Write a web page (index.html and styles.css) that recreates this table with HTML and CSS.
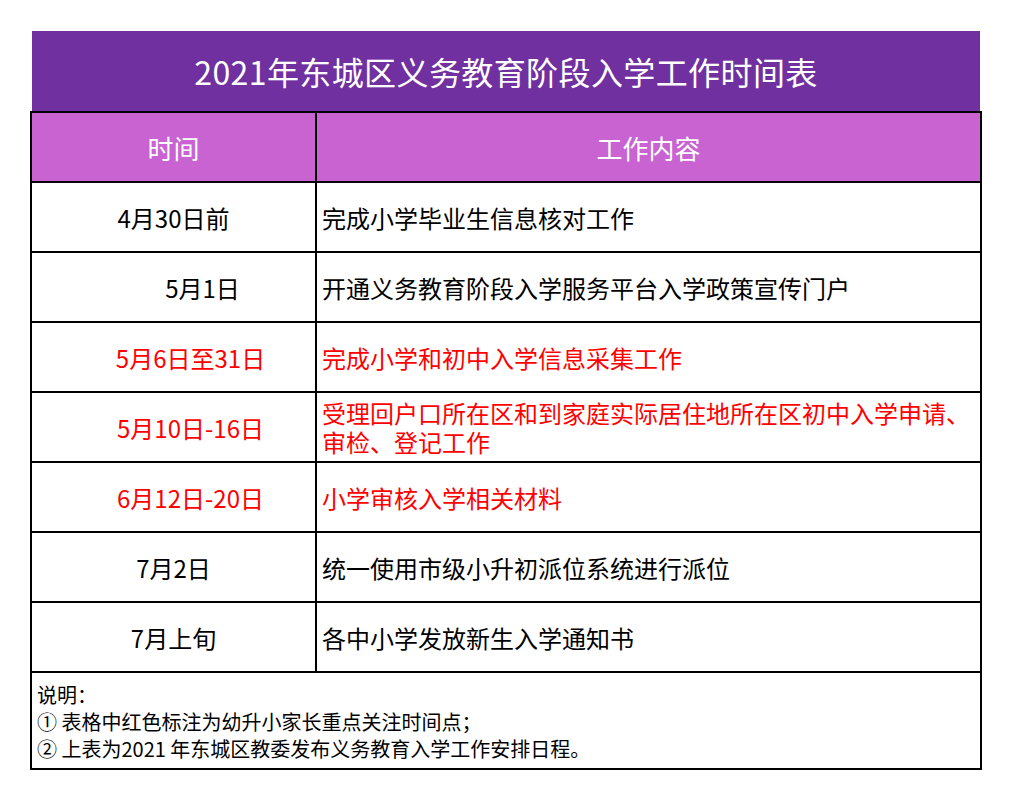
FILE: index.html
```html
<!DOCTYPE html>
<html lang="zh-CN">
<head>
<meta charset="utf-8">
<title>2021年东城区义务教育阶段入学工作时间表</title>
<link rel="stylesheet" href="styles.css">
</head>
<body>
<div class="sheet">
  <div class="title">2021年东城区义务教育阶段入学工作时间表</div>
  <table class="schedule">
    <colgroup><col class="col-time"><col class="col-work"></colgroup>
    <thead>
      <tr><th>时间</th><th>工作内容</th></tr>
    </thead>
    <tbody>
      <tr><td class="time">4月30日前</td><td class="work">完成小学毕业生信息核对工作</td></tr>
      <tr><td class="time"><span class="shift-lg">5月1日</span></td><td class="work">开通义务教育阶段入学服务平台入学政策宣传门户</td></tr>
      <tr class="hot"><td class="time"><span class="shift">5月6日至31日</span></td><td class="work">完成小学和初中入学信息采集工作</td></tr>
      <tr class="hot"><td class="time"><span class="shift">5月10日-16日</span></td><td class="work">受理回户口所在区和到家庭实际居住地所在区初中入学申请、<br>审检、登记工作</td></tr>
      <tr class="hot"><td class="time"><span class="shift">6月12日-20日</span></td><td class="work">小学审核入学相关材料</td></tr>
      <tr><td class="time">7月2日</td><td class="work">统一使用市级小升初派位系统进行派位</td></tr>
      <tr><td class="time">7月上旬</td><td class="work">各中小学发放新生入学通知书</td></tr>
      <tr><td class="note" colspan="2">说明：<br>① 表格中红色标注为幼升小家长重点关注时间点；<br>② 上表为2021 年东城区教委发布义务教育入学工作安排日程。</td></tr>
    </tbody>
  </table>
</div>
</body>
</html>
```

FILE: styles.css
```css
html, body {
  margin: 0;
  padding: 0;
  background: #ffffff;
}
body {
  font-family: "Noto Sans CJK SC", "Noto Sans", sans-serif;
  color: #000;
}
.sheet {
  width: 950px;
  margin: 31px 0 0 30px;
}
.title {
  height: 80px;
  margin-left: 2px;
  background: #7030a0;
  color: #fff;
  font-size: 32px;
  letter-spacing: 0.4px;
  line-height: 80px;
  text-align: center;
}
.schedule {
  width: 950px;
  border-collapse: collapse;
  table-layout: fixed;
  border: 2px solid #000;
}
.col-time { width: 285px; }
.col-work { width: 665px; }
.schedule th,
.schedule td {
  border: 2px solid #000;
  padding: 0;
  vertical-align: middle;
}
.schedule th {
  height: 68px;
  background: #c963d2;
  color: #fff;
  font-size: 26px;
  font-weight: normal;
  text-align: center;
}
.schedule td {
  height: 68px;
  font-size: 24px;
  line-height: 29px;
}
.time {
  text-align: center;
}
.work {
  padding-left: 5px !important;
  text-align: left;
}
.shift { padding-left: 34px; }
.shift-lg { padding-left: 58px; }
.hot td { color: #ff0000; }
.schedule td.note {
  height: auto;
  font-size: 20px;
  line-height: 27px;
  padding: 8px 5px 6px 5px;
  text-align: left;
}
```
